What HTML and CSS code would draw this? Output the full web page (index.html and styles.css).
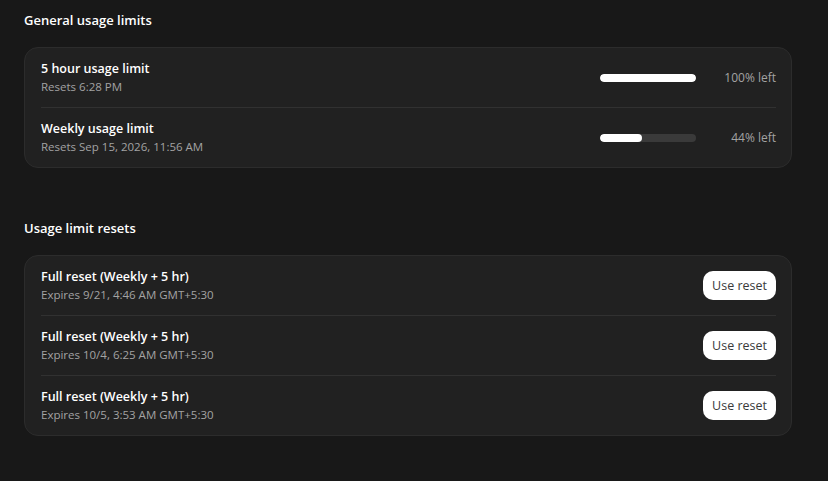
FILE: index.html
```html
<!DOCTYPE html>
<html lang="en">
<head>
    <meta charset="UTF-8">
    <meta name="viewport" content="width=device-width, initial-scale=1.0">
    <title>Usage limits</title>
    <link rel="stylesheet" href="styles.css">
</head>
<body>
    <div class="page">
        <section class="section">
            <h2>General usage limits</h2>
            <div class="card">
                <div class="row">
                    <div class="info">
                        <span class="title">5 hour usage limit</span>
                        <span class="sub">Resets 6:28 PM</span>
                    </div>
                    <div class="meter">
                        <div class="bar"><div class="fill" style="width: 100%"></div></div>
                        <span class="left">100% left</span>
                    </div>
                </div>
                <div class="row">
                    <div class="info">
                        <span class="title">Weekly usage limit</span>
                        <span class="sub">Resets Sep 15, 2026, 11:56 AM</span>
                    </div>
                    <div class="meter">
                        <div class="bar"><div class="fill" style="width: 44%"></div></div>
                        <span class="left">44% left</span>
                    </div>
                </div>
            </div>
        </section>

        <section class="section">
            <h2>Usage limit resets</h2>
            <div class="card">
                <div class="row">
                    <div class="info">
                        <span class="title">Full reset (Weekly + 5 hr)</span>
                        <span class="sub">Expires 9/21, 4:46 AM GMT+5:30</span>
                    </div>
                    <button class="btn">Use reset</button>
                </div>
                <div class="row">
                    <div class="info">
                        <span class="title">Full reset (Weekly + 5 hr)</span>
                        <span class="sub">Expires 10/4, 6:25 AM GMT+5:30</span>
                    </div>
                    <button class="btn">Use reset</button>
                </div>
                <div class="row">
                    <div class="info">
                        <span class="title">Full reset (Weekly + 5 hr)</span>
                        <span class="sub">Expires 10/5, 3:53 AM GMT+5:30</span>
                    </div>
                    <button class="btn">Use reset</button>
                </div>
            </div>
        </section>
    </div>
</body>
</html>
```

FILE: styles.css
```css
:root {
    --background: #181818;
    --card: #212121;
    --border: #2c2c2c;
    --divider: #313131;
    --foreground: #ffffff;
    --muted-foreground: #a3a3a3;
    --track: #3a3a3a;
}

body {
    font-family: "Open Sans", "Noto Sans", sans-serif;
    color: var(--foreground);
    background-color: var(--background);
    margin: 0;
}

.page {
    width: 768px;
    padding: 10px 24px;
    display: flex;
    flex-direction: column;
    gap: 50px;
}

.section h2 {
    font-size: 13px;
    font-weight: 600;
    margin: 0 0 17px;
    line-height: 20px;
}

.card {
    background-color: var(--card);
    border: 1px solid var(--border);
    border-radius: 14px;
    padding: 0 15px 0 16px;
}

.row {
    display: flex;
    align-items: center;
    justify-content: space-between;
    height: 59px;
    border-bottom: 1px solid var(--divider);
}

.row:last-child {
    border-bottom: none;
}

.info {
    display: flex;
    flex-direction: column;
    gap: 1px;
}

.title {
    font-size: 12.5px;
    font-weight: 600;
    line-height: 18px;
}

.sub {
    font-size: 11.5px;
    color: var(--muted-foreground);
    line-height: 16px;
}

.meter {
    display: flex;
    align-items: center;
    gap: 20px;
}

.bar {
    width: 96px;
    height: 8px;
    border-radius: 4px;
    background-color: var(--track);
    overflow: hidden;
}

.fill {
    height: 100%;
    border-radius: 4px;
    background-color: #ffffff;
}

.left {
    width: 60px;
    text-align: right;
    font-size: 12px;
    color: var(--muted-foreground);
}

.btn {
    font-family: "Open Sans", "Noto Sans", sans-serif;
    font-size: 12.5px;
    color: #3a3a3a;
    background-color: #ffffff;
    border: none;
    border-radius: 10px;
    height: 29px;
    padding: 0 9px;
    cursor: pointer;
}
```
